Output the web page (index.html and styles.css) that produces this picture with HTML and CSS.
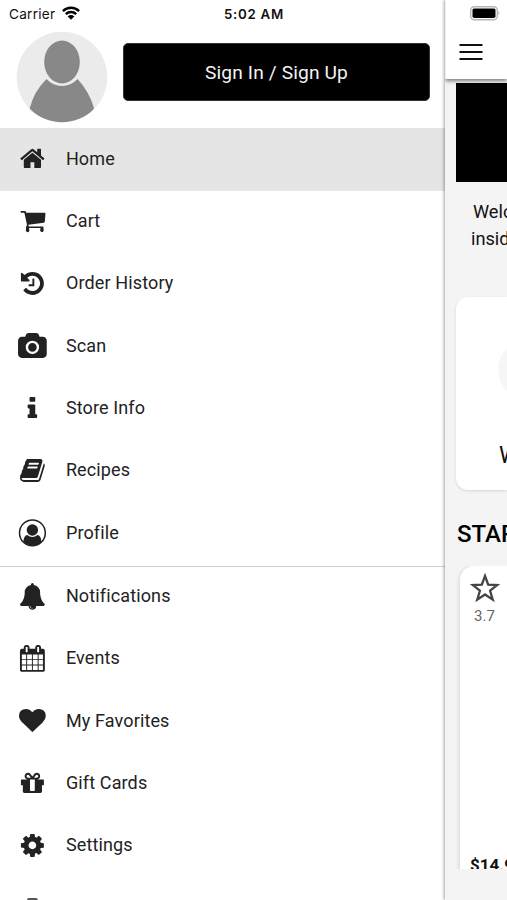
FILE: index.html
```html
<!DOCTYPE html>
<html lang="en">
<head>
<meta charset="utf-8">
<title>Menu</title>
<link rel="stylesheet" href="styles.css">
</head>
<body>
<div class="screen">
<aside class="drawer">
  <div class="status">
    <span class="carrier">Carrier</span>
    <svg class="wifi" viewBox="0 0 18 14"><g fill="none" stroke="#000" stroke-width="2.4"><path d="M.9 5.1a11.6 11.6 0 0 1 16.2 0"/><path d="M3.8 8.2a7.4 7.4 0 0 1 10.4 0"/></g><path d="M5.7 10.4a4.7 4.7 0 0 1 6.6 0L9 13.7z"/></svg>
    <time class="clock">5:02 AM</time>
  </div>
  <div class="account">
    <svg class="avatar" viewBox="0 0 92 92"><defs><clipPath id="round"><circle cx="46" cy="46" r="45.3"/></clipPath></defs><circle cx="46" cy="46" r="45.3" fill="#ebebeb"/><path clip-path="url(#round)" fill="#888" d="M30.5 48Q18 60 13.5 78L20 92H72L78 77Q73 60 61.500 48Q55 55 46 55Q37 55 30.500 48Z"/><ellipse cx="46" cy="31" rx="17.800" ry="21.500" fill="#888"/></svg>
    <button class="sign">Sign In / Sign Up</button>
  </div>
  <nav>
    <ul class="menu">
      <li class="item active"><svg viewBox="0 0 1792 1792"><path d="M1472 992v480q0 26-19 45t-45 19h-384v-384h-256v384h-384q-26 0-45-19t-19-45v-480q0-1 .5-3t.5-3l575-474 575 474q1 2 1 6zm223-69l-62 74q-8 9-21 11h-3q-13 0-21-7l-692-577-692 577q-12 8-24 7-13-2-21-11l-62-74q-8-10-7-23.5t11-21.5l719-599q32-26 76-26t76 26l244 204v-195q0-14 9-23t23-9h192q14 0 23 9t9 23v408l219 182q10 8 11 21.5t-7 23.5z"/></svg>Home</li>
      <li class="item"><svg viewBox="57 234 80 80"><path d="M62 243H75Q78 243 79 248H134Q136 248 136 251L134 275Q134 277 131 278L85 284L86 289H128Q130 289 130 292V297A5.500 5.500 0 1 1 121 297V294H87V297A5.500 5.500 0 1 1 78 298V290L81 285L73 248H62Z"/></svg>Cart</li>
      <li class="item"><svg viewBox="0 0 1792 1792"><path d="M1664 896q0 156-61 298t-164 245-245 164-298 61q-172 0-327-72.5t-264-204.5q-7-10-6.5-22.5t8.5-20.5l137-138q10-9 25-9 16 2 23 12 73 95 179 147t225 52q104 0 198.5-40.5t163.500-109.500 109.500-163.500 40.500-198.500-40.500-198.500-109.500-163.500-163.500-109.500-198.500-40.500q-98 0-188 35.500t-160 101.500l137 138q31 30 14 69-17 40-59 40h-448q-26 0-45-19t-19-45v-448q0-42 40-59 39-17 69 14l130 129q107-101 244.500-156.500t284.500-55.500q156 0 298 61t245 164 164 245 61 298zm-640-288v448q0 14-9 23t-23 9h-320q-14 0-23-9t-9-23v-64q0-14 9-23t23-9h224v-352q0-14 9-23t23-9h64q14 0 23 9t9 23z"/></svg>Order History</li>
      <li class="item"><svg viewBox="0 0 1792 1792"><path d="M896 672q119 0 203.500 84.500t84.500 203.500-84.500 203.500-203.500 84.500-203.500-84.500-84.500-203.500 84.500-203.500 203.500-84.500zm704-416q106 0 181 75t75 181v896q0 106-75 181t-181 75h-1408q-106 0-181-75t-75-181v-896q0-106 75-181t181-75h224l51-136q19-49 69.500-84.500t103.500-35.500h512q53 0 103.500 35.500t69.500 84.500l51 136h224zm-704 1152q185 0 316.500-131.500t131.500-316.500-131.500-316.500-316.500-131.500-316.500 131.500-131.500 316.500 131.500 316.500 316.500 131.500z"/></svg>Scan</li>
      <li class="item"><svg viewBox="0 0 1792 1792"><path d="M1216 1344v128q0 26-19 45t-45 19h-512q-26 0-45-19t-19-45v-128q0-26 19-45t45-19h64v-384h-64q-26 0-45-19t-19-45v-128q0-26 19-45t45-19h384q26 0 45 19t19 45v576h64q26 0 45 19t19 45zm-128-1152v192q0 26-19 45t-45 19h-256q-26 0-45-19t-19-45v-192q0-26 19-45t45-19h256q26 0 45 19t19 45z"/></svg>Store Info</li>
      <li class="item"><svg viewBox="0 0 1792 1792"><path d="M1703 478q40 57 18 129l-275 906q-19 64-76.500 107.500t-122.500 43.500h-923q-77 0-148.500-53.500t-99.500-131.500q-24-67-2-127 0-4 3-27t4-37q1-8-3-21.500t-3-19.500q2-11 8-21t16.500-23.500 16.500-23.500q23-38 45-91.500t30-91.500q3-10 .5-30t-.5-28q3-11 17-28t17-23q21-36 42-92t25-90q1-9-2.500-32t.5-28q4-13 22-30.500t22-22.500q19-26 42.500-84.500t27.500-96.500q1-8-3-25.500t-2-26.500q2-8 9-18t18-23 17-21q8-12 16.500-30.500t15-35 16-36 19.500-32 26.500-23.500 36-11.500 47.500 5.500l-1 3q38-9 51-9h761q74 0 114 56t18 130l-274 906q-36 119-71.500 153.500t-128.500 34.500h-869q-27 0-38 15-11 16-1 43 24 70 144 70h923q29 0 56-15.500t35-41.500l300-987q7-22 5-57 38 15 59 43zm-1064 2q-4 13 2 22.500t20 9.500h608q13 0 25.500-9.500t16.500-22.500l21-64q4-13-2-22.500t-20-9.500h-608q-13 0-25.500 9.500t-16.500 22.500zm-83 256q-4 13 2 22.500t20 9.500h608q13 0 25.500-9.500t16.500-22.500l21-64q4-13-2-22.500t-20-9.500h-608q-13 0-25.500 9.500t-16.500 22.500z"/></svg>Recipes</li>
      <li class="item"><svg viewBox="0 0 80 80"><defs><clipPath id="ring"><circle cx="40" cy="38.500" r="38"/></clipPath></defs><circle cx="40" cy="38.500" r="38.500" fill="none" stroke="#222" stroke-width="4.500"/><circle cx="40" cy="30" r="17"/><path clip-path="url(#ring)" d="M13 66Q14 46 25 45Q32 51 40 51Q48 51 55 45Q66 46 67 66L58 80H22Z"/></svg>Profile</li>
    </ul>
    <ul class="menu second">
      <li class="item"><svg viewBox="0 0 1792 1792"><path d="M912 1696q0-16-16-16-59 0-101.500-42.500t-42.500-101.500q0-16-16-16t-16 16q0 73 51.500 124.500t124.500 51.500q16 0 16-16zm816-288q0 52-38 90t-90 38h-448q0 106-75 181t-181 75-181-75-75-181h-448q-52 0-90-38t-38-90q50-42 91-88t85-119.500 74.500-158.500 50-206 19.500-260q0-152 117-282.500t307-158.500q-8-19-8-39 0-40 28-68t68-28 68 28 28 68q0 20-8 39 190 28 307 158.500t117 282.500q0 139 19.500 260t50 206 74.500 158.500 85 119.500 91 88z"/></svg>Notifications</li>
      <li class="item"><svg viewBox="0 0 1792 1792"><path d="M192 1664h288v-288h-288v288zm352 0h320v-288h-320v288zm-352-352h288v-320h-288v320zm352 0h320v-320h-320v320zm-352-384h288v-288h-288v288zm736 736h320v-288h-320v288zm-384-736h320v-288h-320v288zm768 736h288v-288h-288v288zm-384-352h320v-320h-320v320zm-352-864v-288q0-13-9.500-22.500t-22.500-9.500h-64q-13 0-22.500 9.500t-9.500 22.500v288q0 13 9.500 22.500t22.500 9.500h64q13 0 22.500-9.500t9.500-22.500zm736 864h288v-320h-288v320zm-384-384h320v-288h-320v288zm384 0h288v-288h-288v288zm32-480v-288q0-13-9.500-22.500t-22.500-9.500h-64q-13 0-22.500 9.500t-9.500 22.500v288q0 13 9.500 22.500t22.500 9.500h64q13 0 22.500-9.500t9.500-22.500zm384-64v1280q0 52-38 90t-90 38h-1408q-52 0-90-38t-38-90v-1280q0-52 38-90t90-38h128v-96q0-66 47-113t113-47h64q66 0 113 47t47 113v96h384v-96q0-66 47-113t113-47h64q66 0 113 47t47 113v96h128q52 0 90 38t38 90z"/></svg>Events</li>
      <li class="item"><svg viewBox="0 0 1792 1792"><path d="M896 1664q-26 0-44-18l-624-602q-10-8-27.500-26t-55.500-65.500-68-97.500-53.500-121-23.500-138q0-220 127-344t351-124q62 0 126.500 21.500t120 58 95.500 68.500 76 68q36-36 76-68t95.500-68.500 120-58 126.500-21.500q224 0 351 124t127 344q0 221-229 450l-623 600q-18 18-44 18z"/></svg>My Favorites</li>
      <li class="item"><svg viewBox="0 0 1792 1792"><path d="M1056 1356v-716h-320v716q0 25 18 38.500t46 13.500h192q28 0 46-13.500t18-38.500zm-456-844h195l-126-161q-26-31-69-31-40 0-68 28t-28 68 28 68 68 28zm688-96q0-40-28-68t-68-28q-43 0-69 31l-125 161h194q40 0 68-28t28-68zm376 256v320q0 14-9 23t-23 9h-96v416q0 40-28 68t-68 28h-1088q-40 0-68-28t-28-68v-416h-96q-14 0-23-9t-9-23v-320q0-14 9-23t23-9h440q-93 0-158.500-65.500t-65.500-158.500 65.500-158.500 158.500-65.500q107 0 168 77l128 165 128-165q61-77 168-77 93 0 158.500 65.500t65.500 158.500-65.500 158.500-158.500 65.500h440q14 0 23 9t9 23z"/></svg>Gift Cards</li>
      <li class="item"><svg viewBox="0 0 1792 1792"><path d="M1152 896q0-106-75-181t-181-75-181 75-75 181 75 181 181 75 181-75 75-181zm512-109v222q0 12-8 23t-20 13l-185 28q-19 54-39 91 35 50 107 138 10 12 10 25t-9 23q-27 37-99 108t-94 71q-12 0-26-9l-138-108q-44 23-91 38-16 136-29 186-7 28-36 28h-222q-14 0-24.500-8.500t-11.500-21.500l-28-184q-49-16-90-37l-141 107q-10 9-25 9-14 0-25-11-126-114-165-168-7-10-7-23 0-12 8-23 15-21 51-66.500t54-70.500q-27-50-41-99l-183-27q-13-2-21-12.500t-8-23.500v-222q0-12 8-23t19-13l186-28q14-46 39-92-40-57-107-138-10-12-10-24 0-10 9-23 26-36 98.500-107.500t94.500-71.500q13 0 26 10l138 107q44-23 91-38 16-136 29-186 7-28 36-28h222q14 0 24.500 8.500t11.500 21.500l28 184q49 16 90 37l142-107q9-9 24-9 13 0 25 10 129 119 165 170 7 8 7 22 0 12-8 23-15 21-51 66.500t-54 70.500q26 50 41 98l183 28q13 2 21 12.500t8 23.500z"/></svg>Settings</li>
      <li class="item"><svg viewBox="0 0 80 80"><rect x="24" y="12" width="32" height="60" rx="5" fill="#555"/></svg></li>
    </ul>
  </nav>
</aside>
<main class="page">
  <header class="bar">
    <svg class="battery" viewBox="0 0 32 16"><rect x=".7" y=".7" width="26.600" height="13" rx="3.500" fill="#fff" stroke="#b5b5b5" stroke-width="1.400"/><rect x="2.500" y="2.500" width="23" height="9.500" rx="1.800"/><path d="M28.500 5q2 2.200 0 4.400z" fill="#aaa"/></svg>
    <svg class="burger" viewBox="0 0 24 18"><path d="M.5 2h23M.5 9h23M.5 16h23" stroke="#111" stroke-width="2.200"/></svg>
  </header>
  <div class="banner"></div>
  <p class="welcome"><span class="line">Welcome</span><span class="line">inside</span></p>
  <section class="tile"><div class="disc"></div><div class="tile-name">W</div></section>
  <h2 class="heading">STAR</h2>
  <div class="strip">
    <section class="product">
      <svg class="star" viewBox="0 0 30 30"><path d="M15 3L18.200 11.700L27.300 12L20.100 17.700L22.700 26.600L15 21.500L7.300 26.600L9.900 17.700L2.700 12L11.800 11.700Z" fill="none" stroke="#444" stroke-width="2.300"/></svg>
      <span class="rating">3.7</span>
      <span class="price">$14.99</span>
    </section>
  </div>
</main>
</div>
</body>
</html>
```
FILE: styles.css
```css
* { box-sizing: border-box; }
body { margin: 0; font-family: Roboto, "Liberation Sans", sans-serif; color: #222; background: #fff; }
.screen { display: grid; grid-template-columns: 445px 62px; width: 507px; height: 900px; overflow: hidden; }
.drawer { height: 900px; overflow: hidden; background: #fff; }
.status { display: flex; height: 28px; padding-left: 9px; align-items: center; font-family: Inter, sans-serif; font-size: 13.6px; color: #111; }
.carrier { width: 47px; letter-spacing: .25px; }
.wifi { width: 18px; height: 14px; margin: -2px 0 0 6px; }
.clock { margin-left: 144px; font-weight: 600; font-size: 13.3px; letter-spacing: .7px; white-space: nowrap; }
.account { display: flex; height: 100px; padding: 2px 15px 0 16px; }
.avatar { flex: none; width: 92px; height: 92px; margin-top: .6px; }
.sign { flex: none; width: 307px; height: 58px; margin: 13px 0 0 15px; padding: 0; border: 1px solid #333; border-radius: 5px; background: #000; color: #f3f3f3; font: 19.2px Roboto, sans-serif; letter-spacing: .13px; }
.menu { margin: 0; padding: 0; list-style: none; }
.item { display: flex; height: 62.33px; padding: 0 0 3.400px 19.100px; align-items: center; gap: 20px; font-size: 18px; letter-spacing: .13px; }
.item svg { flex: none; width: 26.800px; height: 26.800px; margin-top: 1.600px; overflow: visible; fill: #222; }
.active { background: #e5e5e5; height: 63px; padding-bottom: 3px; }
.second { margin-top: 1px; border-top: 1px solid #cfcfcf; }
.second .item:first-child { margin-top: -1px; }
.page { height: 900px; overflow: hidden; background: #f4f4f4; color: #111; box-shadow: -1px 0 3px rgba(0,0,0,.35); position: relative; }
.bar { display: flex; flex-direction: column; height: 79px; background: #fff; box-shadow: 0 2px 4px rgba(0,0,0,.5); border-left: 1px solid #eee; }
.battery { width: 32px; height: 16px; margin: 6px 0 0 24px; }
.burger { width: 24px; height: 18px; margin: 21px 0 0 13px; }
.banner { height: 99px; margin: 4px 0 0 11px; background: #000; }
.welcome { display: flex; flex-direction: column; margin: 16px 0 0 26px; font-size: 18.200px; line-height: 27px; }
.line:first-child { padding-left: 2px; }
.tile { height: 193px; margin: 45px 0 0 11px; padding: 42px 0 0 42px; border-radius: 12px 0 0 12px; background: #fff; box-shadow: 0 1px 3px rgba(0,0,0,.12); overflow: hidden; }
.disc { width: 62px; height: 62px; border-radius: 50%; background: #f6f6f6; }
.tile-name { margin: 41px 0 0 1px; font-size: 23px; line-height: 27px; }
.heading { margin: 29px 0 0 12px; font-size: 24px; font-weight: 500; line-height: 30px; color: #000; }
.strip { height: 303px; margin-top: 17px; padding-left: 15px; overflow: hidden; }
.product { display: flex; flex-direction: column; width: 80px; height: 340px; padding: 7px 0 0 10px; border-radius: 14px; background: #fff; box-shadow: 0 1px 5px rgba(0,0,0,.18); }
.star { width: 30px; height: 30px; }
.rating { margin: 4px 0 0 4px; font-size: 15px; line-height: 18px; color: #666; }
.price { margin: 230px 0 0; font-size: 17px; font-weight: 700; line-height: 20px; }
```
